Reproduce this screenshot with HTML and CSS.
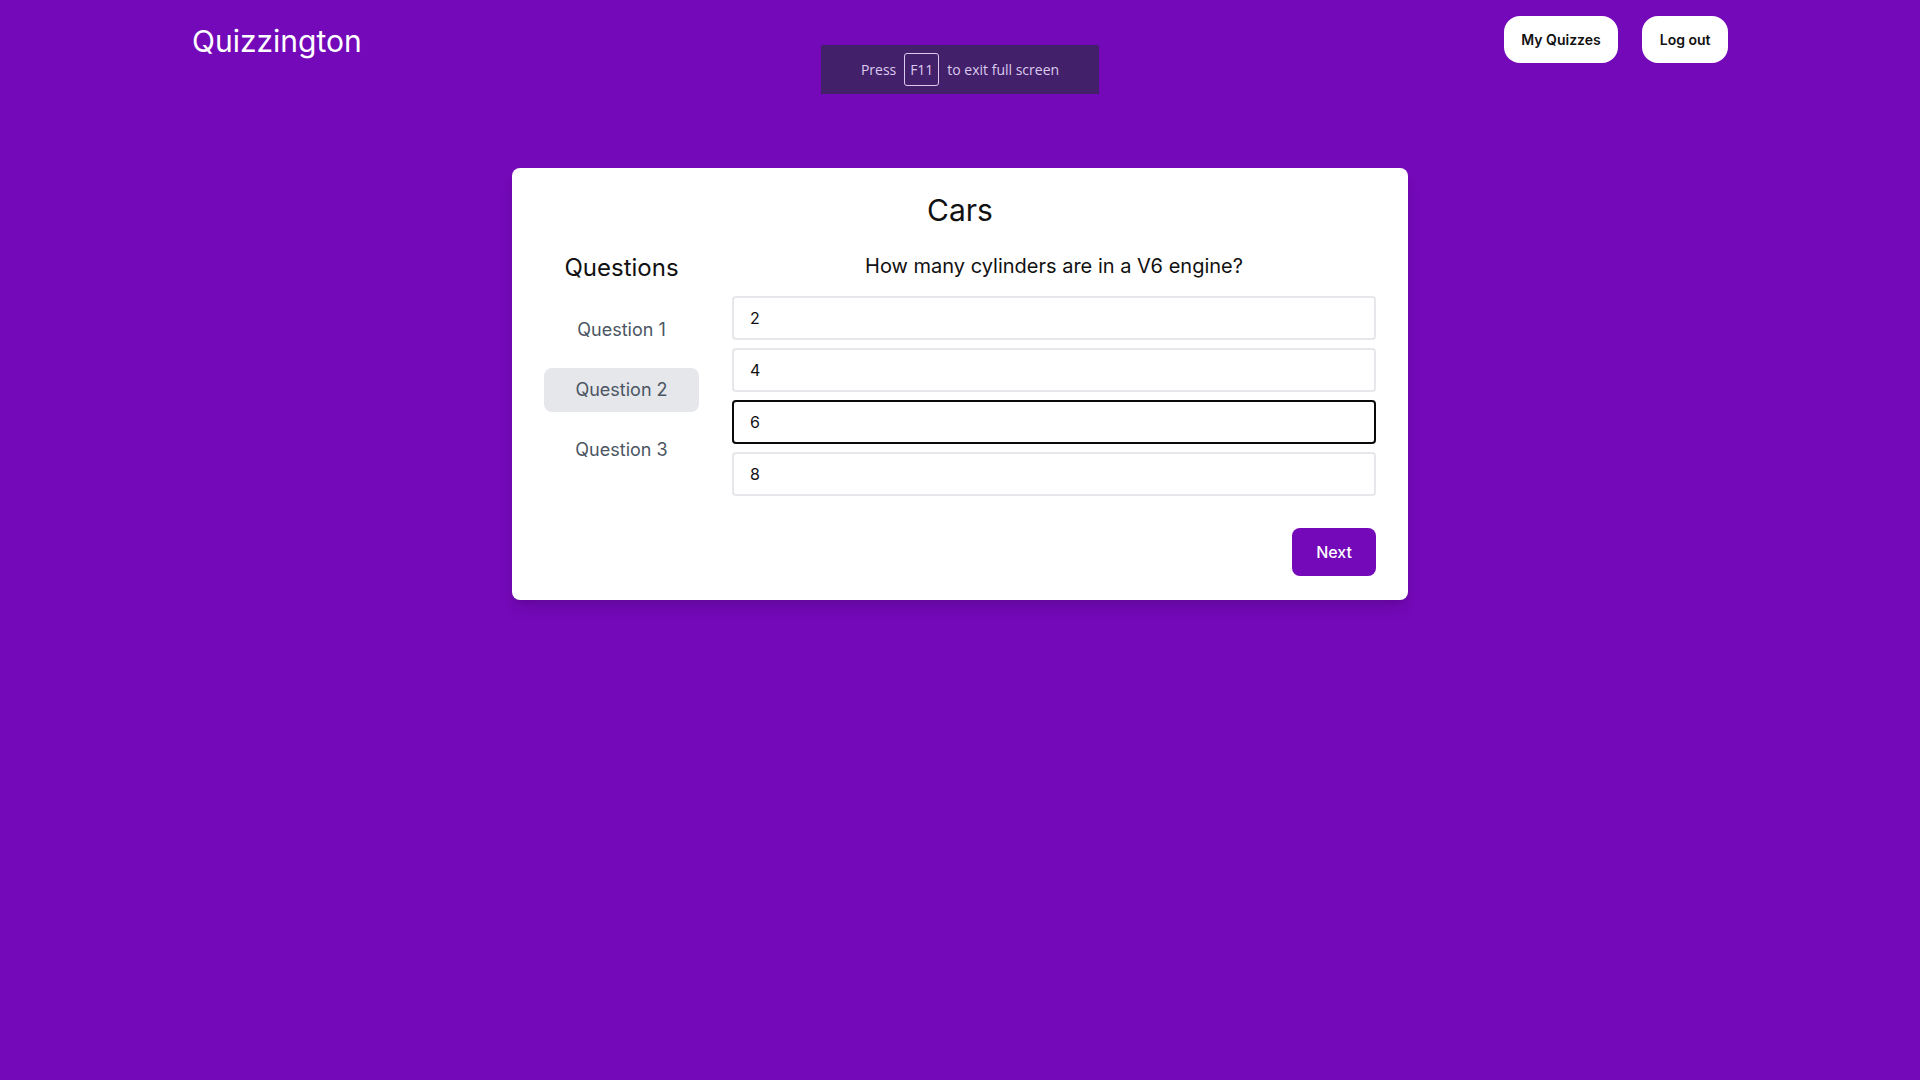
FILE: index.html
```html
<!DOCTYPE html>
<html lang="en">
<head>
<meta charset="utf-8">
<title>Quizzington</title>
<link rel="stylesheet" href="styles.css">
</head>
<body>
<header class="topbar">
  <div class="brand">Quizzington</div>
  <nav class="nav">
    <button class="nav-btn">My Quizzes</button>
    <button class="nav-btn">Log out</button>
  </nav>
</header>
<main class="main">
  <section class="card">
    <h1 class="card-title">Cars</h1>
    <div class="quiz">
      <aside class="sidebar">
        <h2 class="sidebar-title">Questions</h2>
        <ul class="qlist">
          <li class="qitem">Question 1</li>
          <li class="qitem qitem-active">Question 2</li>
          <li class="qitem">Question 3</li>
        </ul>
      </aside>
      <div class="question">
        <p class="prompt">How many cylinders are in a V6 engine?</p>
        <div class="answers">
          <button class="answer">2</button>
          <button class="answer">4</button>
          <button class="answer answer-selected">6</button>
          <button class="answer">8</button>
        </div>
        <div class="actions">
          <button class="next-btn">Next</button>
        </div>
      </div>
    </div>
  </section>
</main>
<div class="fs-toast">Press <span class="fs-key">F11</span> to exit full screen</div>
</body>
</html>
```

FILE: styles.css
```css
* { box-sizing: border-box; }

html, body {
  margin: 0;
  padding: 0;
}

body {
  background: #7309b8;
  font-family: Inter, "Noto Sans", sans-serif;
  min-height: 100vh;
  color: #111;
}

button {
  font-family: inherit;
  border: none;
  cursor: pointer;
}

.topbar {
  width: 1536px;
  margin: 0 auto;
  padding: 16px 0;
  display: flex;
  justify-content: space-between;
  align-items: center;
}

.brand {
  color: #fff;
  font-size: 30px;
  line-height: 36px;
  margin-top: 3px;
}

.nav {
  display: flex;
  gap: 24px;
}

.nav-btn {
  background: #fff;
  color: #111;
  font-size: 14px;
  font-weight: 600;
  line-height: 20px;
  height: 47px;
  padding: 0 17.5px;
  border-radius: 16px;
}

.main {
  display: flex;
  justify-content: center;
  padding-top: 89px;
}

.card {
  width: 896px;
  background: #fff;
  border-radius: 8px;
  padding: 24px 32px;
  box-shadow: 0 10px 15px -3px rgba(0,0,0,0.12), 0 4px 6px -4px rgba(0,0,0,0.1);
}

.card-title {
  margin: 0;
  text-align: center;
  font-size: 30px;
  line-height: 36px;
  font-weight: 400;
  color: #111;
}

.quiz {
  display: flex;
  gap: 33px;
  margin-top: 24px;
}

.sidebar {
  width: 155px;
  flex: none;
}

.sidebar-title {
  margin: 0 0 24px;
  text-align: center;
  font-size: 24px;
  line-height: 32px;
  font-weight: 400;
  color: #111;
}

.qlist {
  list-style: none;
  margin: 0;
  padding: 0;
  display: flex;
  flex-direction: column;
  gap: 16px;
}

.qitem {
  padding: 8px 0;
  text-align: center;
  font-size: 18px;
  line-height: 28px;
  color: #4b5563;
  border-radius: 8px;
}

.qitem-active {
  background: #e5e7eb;
}

.question {
  flex: 1;
  display: flex;
  flex-direction: column;
}

.prompt {
  margin: 0 0 16px;
  text-align: center;
  font-size: 20px;
  line-height: 28px;
  color: #111;
}

.answers {
  display: flex;
  flex-direction: column;
  gap: 8px;
}

.answer {
  display: block;
  width: 100%;
  text-align: left;
  background: #fff;
  border: 2px solid #e5e7eb;
  border-radius: 4px;
  padding: 8px 16px;
  font-size: 16px;
  line-height: 24px;
  color: #111;
}

.answer-selected {
  border-color: #0a0a0a;
}

.actions {
  display: flex;
  justify-content: flex-end;
  margin-top: 32px;
}

.next-btn {
  background: #7309b8;
  color: #fff;
  font-size: 16px;
  font-weight: 500;
  line-height: 24px;
  padding: 12px 24px;
  border-radius: 8px;
}

.fs-toast {
  position: fixed;
  top: 45px;
  left: 821px;
  width: 278px;
  height: 49px;
  background: #43206a;
  color: #dccbef;
  font-family: "Open Sans", "Noto Sans", sans-serif;
  font-size: 14px;
  display: flex;
  align-items: center;
  justify-content: center;
  gap: 8px;
}

.fs-key {
  display: inline-flex;
  align-items: center;
  justify-content: center;
  width: 35px;
  height: 33px;
  border: 1px solid #dccbef;
  border-radius: 3px;
  font-size: 14px;
}
```
